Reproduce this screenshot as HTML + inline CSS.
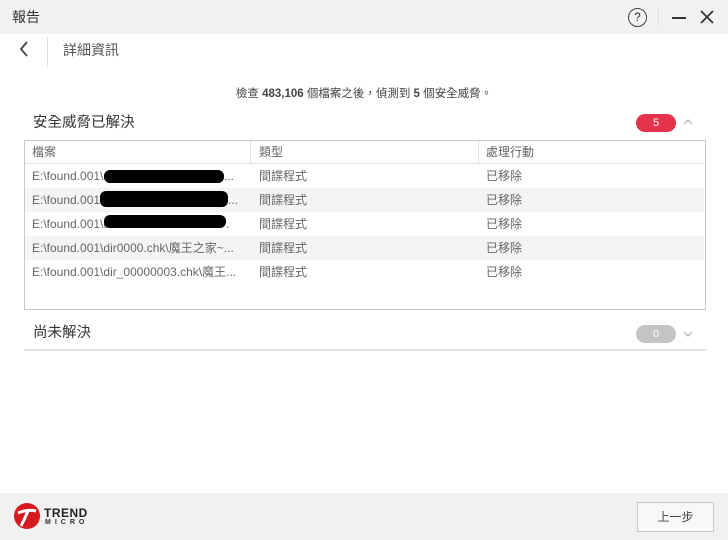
<!DOCTYPE html>
<html><head><meta charset="utf-8"><style>
*{margin:0;padding:0;box-sizing:border-box}
body{width:728px;height:540px;background:#fff;font-family:"Liberation Sans","Noto Sans CJK TC",sans-serif;position:relative;overflow:hidden;color:#333}
.a{position:absolute}
.title{left:0;top:0;width:728px;height:34px;background:#f1f1f1}
.cell{position:absolute;font-size:12px;color:#666;line-height:24px;white-space:nowrap}
.row{position:absolute;left:25px;width:679px;height:24px}
.blk{position:absolute;background:#000;height:13px;border-radius:6px}
</style></head><body>
<div class="a title"></div>
<div class="a" style="left:12px;top:7px;font-size:14px;color:#333">報告</div>
<div class="a" style="left:628px;top:8px;width:19px;height:19px;border:1.5px solid #444;border-radius:50%;font-size:12px;text-align:center;line-height:16px;color:#333">?</div>
<div class="a" style="left:658px;top:8px;width:1px;height:18px;background:#ddd"></div>
<div class="a" style="left:672px;top:17px;width:14px;height:2px;background:#333"></div>
<svg class="a" style="left:700px;top:10px" width="14" height="14"><path d="M1 1L13 13M13 1L1 13" stroke="#333" stroke-width="1.8"/></svg>
<svg class="a" style="left:18px;top:41px" width="12" height="16"><path d="M9 1L3 8L9 15" stroke="#444" stroke-width="1.8" fill="none"/></svg>
<div class="a" style="left:47px;top:37px;width:1px;height:30px;background:#ddd"></div>
<div class="a" style="left:63px;top:40px;font-size:14px;color:#555">詳細資訊</div>
<div class="a" style="left:0;width:728px;top:85px;text-align:center;font-size:11.5px;color:#444">檢查 <b>483,106</b> 個檔案之後，偵測到 <b>5</b> 個安全威脅。</div>
<div class="a" style="left:33px;top:111px;font-size:14.5px;color:#333">安全威脅已解決</div>
<div class="a" style="left:636px;top:114px;width:40px;height:18px;border-radius:9px;background:#e5334b;color:#fff;font-size:11px;text-align:center;line-height:18px">5</div>
<svg class="a" style="left:682px;top:118px" width="12" height="8"><path d="M2 6L6 2L10 6" stroke="#aaa" stroke-width="1.2" fill="none"/></svg>
<div class="a" style="left:24px;top:140px;width:682px;height:170px;border:1px solid #c8c8c8"></div>
<div class="row" style="top:141px;border-bottom:1px solid #e0e0e0;height:23px"></div>
<div class="a" style="left:250px;top:141px;width:1px;height:23px;background:#e0e0e0"></div>
<div class="a" style="left:478px;top:141px;width:1px;height:23px;background:#e0e0e0"></div>
<div class="cell" style="left:32px;top:140px">檔案</div>
<div class="cell" style="left:259px;top:140px">類型</div>
<div class="cell" style="left:486px;top:140px">處理行動</div>
<div class="row" style="top:188px;background:#f4f4f4"></div>
<div class="row" style="top:236px;background:#f4f4f4"></div>
<div class="cell" style="left:32px;top:164px">E:\found.001\d</div>
<div class="cell" style="left:224px;top:164px">...</div>
<div class="cell" style="left:32px;top:188px">E:\found.001\</div>
<div class="cell" style="left:228px;top:188px">...</div>
<div class="cell" style="left:32px;top:212px">E:\found.001\d</div>
<div class="cell" style="left:226px;top:212px">.</div>
<div class="cell" style="left:32px;top:236px">E:\found.001\dir0000.chk\魔王之家~...</div>
<div class="cell" style="left:32px;top:260px">E:\found.001\dir_00000003.chk\魔王...</div>
<div class="blk" style="left:104px;top:170px;width:120px"></div>
<div class="blk" style="left:100px;top:191px;width:128px;height:16px"></div>
<div class="blk" style="left:104px;top:215px;width:122px"></div>
<div class="cell" style="left:259px;top:164px">間諜程式</div>
<div class="cell" style="left:259px;top:188px">間諜程式</div>
<div class="cell" style="left:259px;top:212px">間諜程式</div>
<div class="cell" style="left:259px;top:236px">間諜程式</div>
<div class="cell" style="left:259px;top:260px">間諜程式</div>
<div class="cell" style="left:486px;top:164px">已移除</div>
<div class="cell" style="left:486px;top:188px">已移除</div>
<div class="cell" style="left:486px;top:212px">已移除</div>
<div class="cell" style="left:486px;top:236px">已移除</div>
<div class="cell" style="left:486px;top:260px">已移除</div>
<div class="a" style="left:33px;top:321px;font-size:14.5px;color:#333">尚未解決</div>
<div class="a" style="left:636px;top:325px;width:40px;height:18px;border-radius:9px;background:#c4c4c4;color:#fff;font-size:11px;text-align:center;line-height:18px">0</div>
<svg class="a" style="left:682px;top:330px" width="12" height="8"><path d="M2 2L6 6L10 2" stroke="#aaa" stroke-width="1.2" fill="none"/></svg>
<div class="a" style="left:24px;top:349px;width:682px;height:2px;background:#e2e2e2"></div>
<div class="a" style="left:0;top:493px;width:728px;height:47px;background:#f1f1f1"></div>
<svg class="a" style="left:13px;top:502px" width="28" height="28"><circle cx="14" cy="14" r="13" fill="#d71920"/><path d="M5 11Q14 7 23 9M15 9Q12 16 8 24" stroke="#fff" stroke-width="3" fill="none"/></svg>
<div class="a" style="left:44px;top:506px;font-size:12px;font-weight:bold;color:#222;letter-spacing:0.5px">TREND</div>
<div class="a" style="left:45px;top:519px;font-size:7px;font-weight:bold;color:#333;letter-spacing:4px">MICRO</div>
<div class="a" style="left:637px;top:502px;width:77px;height:30px;border:1px solid #c8c8c8;background:#f8f8f8;font-size:12px;color:#444;text-align:center;line-height:28px">上一步</div>
</body></html>
